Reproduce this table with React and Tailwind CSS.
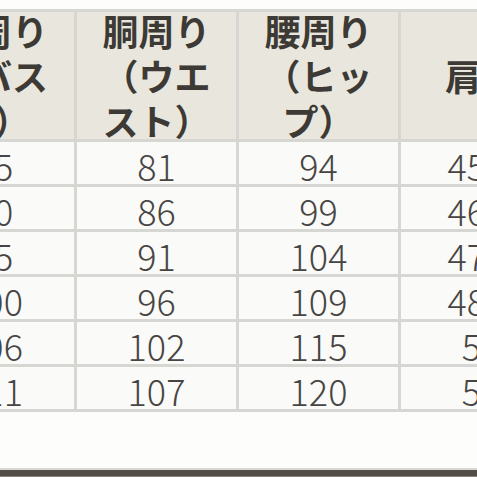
import React from "react";

const headers = [
  ["胸周り", "（バス", "ト）"],
  ["胴周り", "（ウエ", "スト）"],
  ["腰周り", "（ヒッ", "プ）"],
  ["肩幅"],
];

const rows = [
  ["85", "81", "94", "45.5"],
  ["90", "86", "99", "46.5"],
  ["95", "91", "104", "47.5"],
  ["100", "96", "109", "48.5"],
  ["106", "102", "115", "50"],
  ["111", "107", "120", "51"],
];

export default function App() {
  return (
    <div
      className="w-[477px] h-[477px] overflow-hidden bg-[#fdfdfc] flex flex-col"
      style={{ fontFamily: '"Noto Sans CJK JP", "Noto Sans", sans-serif' }}
    >
      <div className="h-[9px] shrink-0" />
      <div className="ml-[-86px] w-[643px] shrink-0 bg-[#d6d6d3] pt-[3px] pb-[3px]">
        <div className="grid grid-cols-[160px_159px_159px_160px] gap-[3px]">
          {headers.map((lines, i) => (
            <div
              key={i}
              className="h-[127px] bg-[#e9e7dd] flex flex-col items-center justify-center text-[36px] leading-[45px] font-bold text-[#3d3a35]"
            >
              {lines.map((l, j) => (
                <div key={j} className="w-[108px] text-center whitespace-nowrap">
                  {l}
                </div>
              ))}
            </div>
          ))}
        </div>
        {rows.map((r, i) => (
          <div
            key={i}
            className="grid grid-cols-[160px_159px_159px_160px] gap-[3px] mt-[3px]"
          >
            {r.map((v, j) => (
              <div
                key={j}
                className="h-[42px] bg-[#fafaf8] flex items-center justify-center text-[36px] leading-[42px] font-light text-[#474543] pt-[4px]"
              >
                {v}
              </div>
            ))}
          </div>
        ))}
      </div>
      <div className="flex-1" />
      <div className="h-[2px] shrink-0 bg-[#d9d8d5]" />
      <div className="h-[6px] shrink-0 bg-[#534f48]" />
      <div className="h-[1px] shrink-0 bg-[#8a867f]" />
    </div>
  );
}
